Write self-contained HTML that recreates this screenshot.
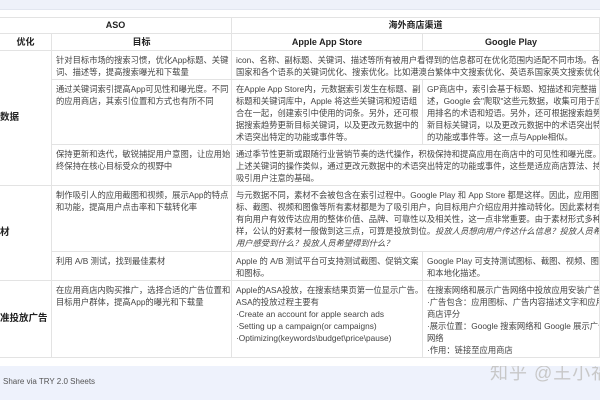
<!DOCTYPE html>
<html><head><meta charset="utf-8"><style>
*{margin:0;padding:0;box-sizing:border-box}
html,body{width:600px;height:400px;overflow:hidden}
body{background:#fff;position:relative;font-family:"Liberation Sans","Noto Sans CJK SC",sans-serif;color:#444;font-size:8.3px;line-height:12px}
.top{position:absolute;left:0;top:0;width:600px;height:10px;background:#eef1fa;border-bottom:1px solid #e2e6f0}
.bot{position:absolute;left:0;top:366px;width:600px;height:34px;background:#eef2fc;overflow:hidden}
.c{position:absolute;border-right:1px solid #e3e3e3;border-bottom:1px solid #e3e3e3;overflow:hidden;white-space:nowrap;padding:3px 4px}
.h{font-weight:bold;color:#222;text-align:center;font-size:9px;line-height:11px}
.l{font-weight:bold;color:#222;font-size:9.5px;display:flex;align-items:center;padding:0}
i{font-style:italic}
</style></head><body>
<div class="top"></div>
<div style="position:absolute;left:0;top:17px;width:600px;border-top:1px solid #e3e3e3"></div>
<div class="c h" style="left:0;top:17px;width:232px;height:17px">ASO</div>
<div class="c h" style="left:232px;top:17px;width:368px;height:17px">海外商店渠道</div>
<div class="c h" style="left:0;top:34px;width:52px;height:17px">优化</div>
<div class="c h" style="left:52px;top:34px;width:180px;height:17px">目标</div>
<div class="c h" style="left:232px;top:34px;width:191px;height:17px">Apple App Store</div>
<div class="c h" style="left:423px;top:34px;width:177px;height:17px">Google Play</div>

<div class="c l" style="left:0;top:51px;width:52px;height:135px">数据</div>
<div class="c" style="left:52px;top:51px;width:180px;height:29px">针对目标市场的搜索习惯，优化App标题、关键<br>词、描述等，提高搜索曝光和下载量</div>
<div class="c" style="left:232px;top:51px;width:368px;height:29px">icon、名称、副标题、关键词、描述等所有被用户看得到的信息都可在优化范围内适配不同市场。各个<br>国家和各个语系的关键词优化、搜索优化。比如港澳台繁体中文搜索优化、英语系国家英文搜索优化</div>
<div class="c" style="left:52px;top:80px;width:180px;height:65px">通过关键词索引提高App可见性和曝光度。不同<br>的应用商店，其索引位置和方式也有所不同</div>
<div class="c" style="left:232px;top:80px;width:191px;height:65px">在Apple App Store内，元数据索引发生在标题、副<br>标题和关键词库中，Apple 将这些关键词和短语组<br>合在一起，创建索引中使用的词条。另外，还可根<br>据搜索趋势更新目标关键词，以及更改元数据中的<br>术语突出特定的功能或事件等。</div>
<div class="c" style="left:423px;top:80px;width:177px;height:65px">GP商店中，索引会基于标题、短描述和完整描<br>述，Google 会"爬取"这些元数据，收集可用于应<br>用排名的术语和短语。另外，还可根据搜索趋势更<br>新目标关键词，以及更改元数据中的术语突出特定<br>的功能或事件等。这一点与Apple相似。</div>
<div class="c" style="left:52px;top:145px;width:180px;height:41px">保持更新和迭代，敏锐捕捉用户意图，让应用始<br>终保持在核心目标受众的视野中</div>
<div class="c" style="left:232px;top:145px;width:368px;height:41px">通过季节性更新或跟随行业营销节奏的迭代操作，积极保持和提高应用在商店中的可见性和曝光度。跟<br>上述关键词的操作类似，通过更改元数据中的术语突出特定的功能或事件，这些是适应商店算法、持续<br>吸引用户注意的基础。</div>

<div class="c l" style="left:0;top:186px;width:52px;height:95px">材</div>
<div class="c" style="left:52px;top:186px;width:180px;height:66px">制作吸引人的应用截图和视频，展示App的特点<br>和功能，提高用户点击率和下载转化率</div>
<div class="c" style="left:232px;top:186px;width:368px;height:66px">与元数据不同，素材不会被包含在索引过程中。Google Play 和 App Store 都是这样。因此，应用图<br>标、截图、视频和图像等所有素材都是为了吸引用户，向目标用户介绍应用并推动转化。因此素材有没<br>有向用户有效传达应用的整体价值、品牌、可靠性以及相关性，这一点非常重要。由于素材形式多种多<br>样，公认的好素材一般做到这三点，可算是投放到位。<i>投放人员想向用户传达什么信息？投放人员希望<br>用户感受到什么？投放人员希望得到什么？</i></div>
<div class="c" style="left:52px;top:252px;width:180px;height:29px">利用 A/B 测试，找到最佳素材</div>
<div class="c" style="left:232px;top:252px;width:191px;height:29px">Apple 的 A/B 测试平台可支持测试截图、促销文案<br>和图标。</div>
<div class="c" style="left:423px;top:252px;width:177px;height:29px">Google Play 可支持测试图标、截图、视频、图像<br>和本地化描述。</div>

<div class="c l" style="left:0;top:281px;width:52px;height:77px">准投放广告</div>
<div class="c" style="left:52px;top:281px;width:180px;height:77px">在应用商店内购买推广，选择合适的广告位置和<br>目标用户群体，提高App的曝光和下载量</div>
<div class="c" style="left:232px;top:281px;width:191px;height:77px">Apple的ASA投放，在搜索结果页第一位显示广告。<br>ASA的投放过程主要有<br>·Create an account for apple search ads<br>·Setting up a campaign(or campaigns)<br>·Optimizing(keywords\budget\price\pause)</div>
<div class="c" style="left:423px;top:281px;width:177px;height:77px">在搜索网络和展示广告网络中投放应用安装广告<br>·广告包含：应用图标、广告内容描述文字和应用<br>商店评分<br>·展示位置：Google 搜索网络和 Google 展示广告<br>网络<br>·作用：链接至应用商店</div>

<div class="bot">
<div style="position:absolute;left:3px;top:10px;font-size:8px;color:#555;white-space:nowrap">Share via TRY 2.0 Sheets</div>
<div style="position:absolute;left:490px;top:-4px;width:110px;overflow:hidden;font-size:18px;line-height:22px;color:#c8c8c8;letter-spacing:1px;white-space:nowrap">知乎 @王小福</div>
</div>
</body></html>
